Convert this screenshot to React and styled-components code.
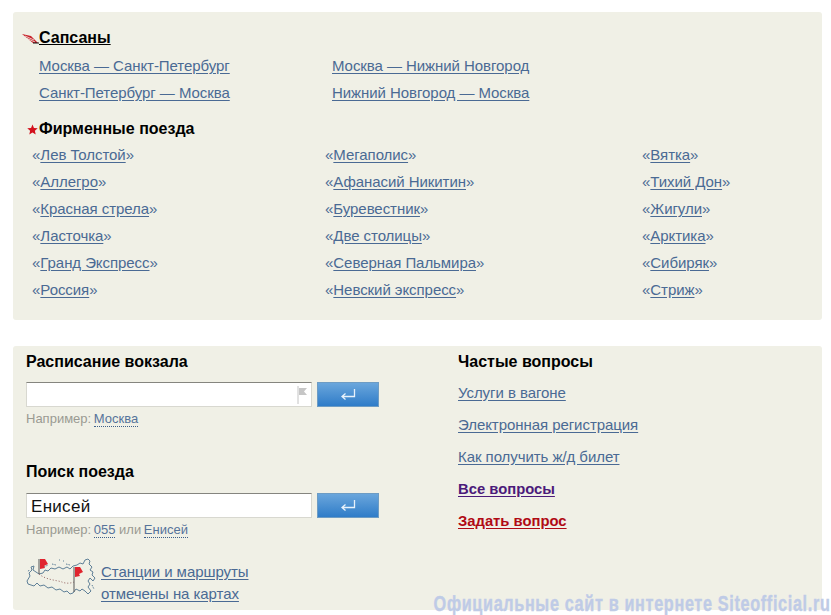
import React from "react";
import styled, { createGlobalStyle } from "styled-components";

const GlobalStyle = createGlobalStyle`
  html, body {
    margin: 0;
    padding: 0;
    background: #fff;
    overflow: hidden;
  }
  body {
    font-family: "Liberation Sans", Arial, sans-serif;
    font-size: 15px;
    color: #000;
  }
`;

const Page = styled.div`
  position: relative;
  width: 831px;
  height: 615px;
  overflow: hidden;
  padding: 12px 9px 0 13px;
  box-sizing: border-box;
  display: flex;
  flex-direction: column;
  gap: 26px;
`;

const Panel = styled.section`
  background: #f0f0e6;
  border-radius: 3px;
`;

const TrainsPanel = styled(Panel)`
  height: 308px;
  padding-top: 16px;
  box-sizing: border-box;
`;

const Heading = styled.h3`
  display: flex;
  align-items: center;
  margin: 0;
  padding-left: 8px;
  height: 20px;
  font-size: 16px;
  font-weight: bold;
`;

const HeadingIcon = styled.span`
  display: flex;
  justify-content: flex-end;
  width: 18px;
  flex: none;
  padding-right: ${(props) => props.$inset || 0}px;
  box-sizing: border-box;
`;

const HeadingLink = styled.a`
  color: #000;
  text-decoration: underline;
`;

const Link = styled.a`
  color: #4a6a94;
  letter-spacing: -0.06px;
  text-decoration: underline;
  text-underline-offset: 2px;
`;

const SapsanGrid = styled.div`
  display: grid;
  grid-template-columns: 293px 1fr;
  grid-auto-rows: 27px;
  align-items: center;
  margin-top: 4px;
  padding-left: 26px;
  height: 54px;
`;

const BrandHeading = styled(Heading)`
  margin-top: 13px;
`;

const BrandGrid = styled.div`
  display: grid;
  grid-template-columns: 293px 317px 1fr;
  grid-auto-rows: 27px;
  align-items: center;
  margin-top: 2px;
  padding-left: 19px;
`;

const Quote = styled.span`
  color: #4a6a94;
`;

const InfoPanel = styled(Panel)`
  height: 264px;
  display: grid;
  grid-template-columns: 432px 1fr;
  padding: 6px 0 0 13px;
  box-sizing: border-box;
`;

const SearchColumn = styled.div`
  display: flex;
  flex-direction: column;
`;

const BlockTitle = styled.h3`
  margin: 0;
  height: 20px;
  line-height: 20px;
  font-size: 16px;
  font-weight: bold;
`;

const SearchBlock = styled.div`
  display: flex;
  flex-direction: column;
`;

const StationBlock = styled(SearchBlock)`
  height: 110px;
`;

const SearchRow = styled.div`
  display: flex;
  gap: 5px;
  margin-top: ${(props) => props.$top}px;
`;

const InputBox = styled.div`
  position: relative;
  width: 286px;
  height: 25px;
  box-sizing: border-box;
  background: #fff;
  border: 1px solid #d8d8d0;
  border-top: 1px solid #85857f;
  padding-left: 4px;
  font-size: 17px;
  line-height: 26px;
  letter-spacing: 0.3px;
  color: #111;
`;

const FlagMark = styled.span`
  position: absolute;
  top: 3px;
  right: 3px;
  display: flex;
`;

const EnterButton = styled.button`
  display: flex;
  align-items: center;
  justify-content: center;
  width: 62px;
  height: 25px;
  padding: 0;
  box-sizing: border-box;
  border: 1px solid #6d9cc4;
  background: linear-gradient(#6aa6dc, #2f7cc8);
`;

const Hint = styled.div`
  margin-top: 4px;
  font-size: 13px;
  line-height: 16px;
  color: #9a9a92;
`;

const DottedLink = styled.a`
  color: #56739a;
  border-bottom: 1px dotted #3d5f8a;
  margin-left: -1px;
`;

const MapRow = styled.div`
  display: flex;
  gap: 3px;
  margin-top: 20px;
`;

const MapLinks = styled.div`
  display: flex;
  flex-direction: column;
  line-height: 22px;
  padding-top: 3px;
`;

const FaqList = styled.div`
  display: flex;
  flex-direction: column;
  margin-top: 4px;
`;

const FaqItem = styled.div`
  height: 32px;
  display: flex;
  align-items: center;
`;

const StrongLink = styled.a`
  padding-top: 2px;
  font-size: 14.8px;
  font-weight: bold;
  text-decoration: underline;
  text-underline-offset: 2px;
  color: ${(props) => props.$color};
`;

const Watermark = styled.div`
  position: absolute;
  right: 1px;
  bottom: 0;
  font-size: 22px;
  font-weight: bold;
  line-height: 22px;
  letter-spacing: 0.9px;
  white-space: nowrap;
  color: #bfcbe6;
  -webkit-text-stroke: 0.4px #bfcbe6;
  transform: scaleX(0.737);
  transform-origin: right center;
`;

const brandTrains = [
  "Лев Толстой",
  "Мегаполис",
  "Вятка",
  "Аллегро",
  "Афанасий Никитин",
  "Тихий Дон",
  "Красная стрела",
  "Буревестник",
  "Жигули",
  "Ласточка",
  "Две столицы",
  "Арктика",
  "Гранд Экспресс",
  "Северная Пальмира",
  "Сибиряк",
  "Россия",
  "Невский экспресс",
  "Стриж",
];

const SapsanIcon = () => (
  <svg width="17" height="11" viewBox="0 0 17 11">
    <path d="M0 1 L9 3 L15 9 L16 10 L11 10 Z" fill="#c8202a" />
    <path d="M3 3 L12 7 M5 5.5 L13 9" stroke="#f0f0e6" strokeWidth="0.8" />
    <path d="M11 10 H17" stroke="#111" strokeWidth="1" />
  </svg>
);

const StarIcon = () => (
  <svg width="11" height="11" viewBox="0 0 24 24">
    <path
      d="M12 1 L15.2 8.6 L23.4 9.3 L17.2 14.7 L19 22.8 L12 18.5 L5 22.8 L6.8 14.7 L0.6 9.3 L8.8 8.6 Z"
      fill="#d3111d"
    />
  </svg>
);

const EnterIcon = () => (
  <svg width="16" height="13" viewBox="0 0 16 13">
    <path
      d="M14.5 1 V8.5 H2.5 M5.5 5.5 L2 8.5 L5.5 11.5"
      fill="none"
      stroke="#e8f2fb"
      strokeWidth="1.3"
    />
  </svg>
);

const InputFlag = () => (
  <svg width="11" height="18" viewBox="0 0 11 18">
    <path d="M1 0 V18" stroke="#c4c4c4" strokeWidth="1" />
    <path d="M2 2 H10 L7 5.5 L10 9 H2 Z" fill="#c6c6c6" />
  </svg>
);

const RussiaMap = () => (
  <svg width="72" height="38" viewBox="0 0 72 38" style={{ flex: "none" }}>
    <path
      d="M1 23 L4 18 L3 15 L6 12 L5 9 L8 8 L7 12 L10 14 L13 16 L17 15 L19 12 L22 13 L25 10 L29 11 L33 9 L37 11 L41 9 L44 11 L47 8 L51 7 L54 5 L57 6 L59 2 L62 1 L64 3 L63 6 L66 9 L64 12 L67 14 L66 17 L69 20 L67 23 L64 20 L62 23 L64 26 L62 29 L65 33 L62 36 L59 33 L56 31 L54 33 L50 31 L47 35 L44 36 L41 33 L38 34 L34 31 L30 32 L26 29 L22 30 L18 27 L14 28 L11 25 L8 28 L5 27 L2 26 Z"
      fill="none"
      stroke="#5f8098"
      strokeWidth="1"
    />
    <path
      d="M18 9 L22 7 M26 6 L30 7 M33 2 L34 2 M37 3 L38 3 M40 6 L44 7 M66 27 L68 31 M3 12 L2 14"
      fill="none"
      stroke="#5f8098"
      strokeWidth="1"
      strokeDasharray="1.5 1"
    />
    <path
      d="M13 16 C20 22 30 22 36 24 C40 26 46 25 48 24"
      fill="none"
      stroke="#7a3a3a"
      strokeWidth="0.8"
      strokeDasharray="1 2"
    />
    <path d="M13 1 V16" stroke="#555" strokeWidth="1" />
    <path d="M14 1 H19 L22 6 L18 8 L19 10 L14 11 Z" fill="#e0242e" />
    <path d="M48 9 V34" stroke="#555" strokeWidth="1" />
    <path d="M49 9 H54 L57 14 L53 16 L54 18 L49 19 Z" fill="#e0242e" />
  </svg>
);

export default function App() {
  return (
    <Page>
      <GlobalStyle />
      <TrainsPanel>
        <Heading>
          <HeadingIcon>
            <SapsanIcon />
          </HeadingIcon>
          <HeadingLink>Сапсаны</HeadingLink>
        </Heading>
        <SapsanGrid>
          <div><Link>Москва — Санкт-Петербург</Link></div>
          <div><Link>Москва — Нижний Новгород</Link></div>
          <div><Link>Санкт-Петербург — Москва</Link></div>
          <div><Link>Нижний Новгород — Москва</Link></div>
        </SapsanGrid>
        <BrandHeading>
          <HeadingIcon $inset={1}>
            <StarIcon />
          </HeadingIcon>
          Фирменные поезда
        </BrandHeading>
        <BrandGrid>
          {brandTrains.map((name) => (
            <div key={name}>
              <Quote>«</Quote>
              <Link>{name}</Link>
              <Quote>»</Quote>
            </div>
          ))}
        </BrandGrid>
      </TrainsPanel>
      <InfoPanel>
        <SearchColumn>
          <StationBlock>
            <BlockTitle>Расписание вокзала</BlockTitle>
            <SearchRow $top={10}>
              <InputBox>
                <FlagMark>
                  <InputFlag />
                </FlagMark>
              </InputBox>
              <EnterButton>
                <EnterIcon />
              </EnterButton>
            </SearchRow>
            <Hint>
              Например: <DottedLink>Москва</DottedLink>
            </Hint>
          </StationBlock>
          <SearchBlock>
            <BlockTitle>Поиск поезда</BlockTitle>
            <SearchRow $top={11}>
              <InputBox>Енисей</InputBox>
              <EnterButton>
                <EnterIcon />
              </EnterButton>
            </SearchRow>
            <Hint>
              Например: <DottedLink>055</DottedLink> или <DottedLink>Енисей</DottedLink>
            </Hint>
            <MapRow>
              <RussiaMap />
              <MapLinks>
                <div><Link>Станции и маршруты</Link></div>
                <div><Link>отмечены на картах</Link></div>
              </MapLinks>
            </MapRow>
          </SearchBlock>
        </SearchColumn>
        <div>
          <BlockTitle>Частые вопросы</BlockTitle>
          <FaqList>
            <FaqItem><Link>Услуги в вагоне</Link></FaqItem>
            <FaqItem><Link>Электронная регистрация</Link></FaqItem>
            <FaqItem><Link>Как получить ж/д билет</Link></FaqItem>
            <FaqItem><StrongLink $color="#4b1a7a">Все вопросы</StrongLink></FaqItem>
            <FaqItem><StrongLink $color="#b00a14">Задать вопрос</StrongLink></FaqItem>
          </FaqList>
        </div>
      </InfoPanel>
      <Watermark>Официальные сайт в интернете Siteofficial.ru</Watermark>
    </Page>
  );
}
